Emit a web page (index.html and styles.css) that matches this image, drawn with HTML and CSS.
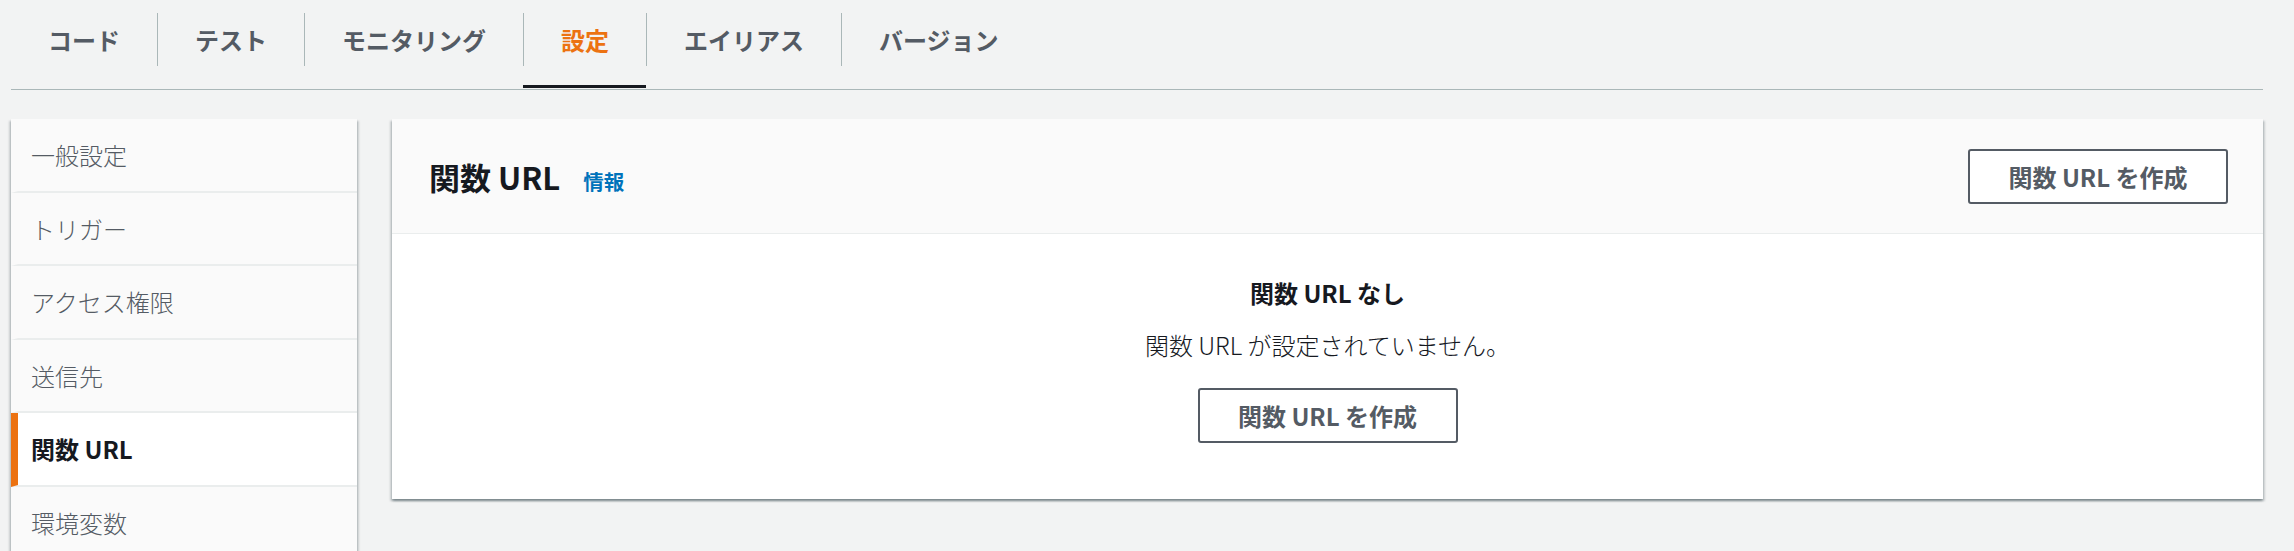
FILE: index.html
```html
<!DOCTYPE html>
<html lang="ja">
<head>
<meta charset="utf-8">
<title>関数 URL</title>
<link rel="stylesheet" href="styles.css">
</head>
<body>
<div class="page">
  <nav class="tabs">
    <div class="tab"><span class="tab-label first">コード</span></div>
    <div class="tab"><span class="tab-label">テスト</span></div>
    <div class="tab"><span class="tab-label">モニタリング</span></div>
    <div class="tab active"><span class="tab-label">設定</span></div>
    <div class="tab"><span class="tab-label">エイリアス</span></div>
    <div class="tab"><span class="tab-label">バージョン</span></div>
  </nav>
  <div class="layout">
    <aside class="sidenav">
      <div class="nav-item">一般設定</div>
      <div class="nav-item">トリガー</div>
      <div class="nav-item">アクセス権限</div>
      <div class="nav-item">送信先</div>
      <div class="nav-item active">関数 URL</div>
      <div class="nav-item">環境変数</div>
    </aside>
    <section class="panel">
      <header class="panel-header">
        <div class="panel-title">
          <h2>関数 URL</h2>
          <a class="info">情報</a>
        </div>
        <button class="btn">関数 URL を作成</button>
      </header>
      <div class="panel-body">
        <div class="empty-title">関数 URL なし</div>
        <div class="empty-text">関数 URL が設定されていません。</div>
        <button class="btn">関数 URL を作成</button>
      </div>
    </section>
  </div>
</div>
</body>
</html>
```
FILE: styles.css
```css
html, body {
  margin: 0;
  height: 100%;
  background: #f2f3f3;
  overflow: hidden;
}
body {
  font-family: "Noto Sans CJK JP", "Noto Sans", sans-serif;
  color: #16191f;
}
.page {
  padding: 0 31px 0 11px;
}
.tabs {
  display: flex;
  align-items: flex-start;
  height: 89px;
  border-bottom: 1px solid #aab7b8;
}
.tab {
  height: 88px;
  box-sizing: border-box;
  padding-top: 13px;
  border-bottom: 3px solid transparent;
}
.tab.active {
  border-bottom-color: #16191f;
}
.tab-label {
  display: block;
  height: 53px;
  line-height: 53px;
  padding: 0 37px;
  border-left: 1px solid #aab7b8;
  font-size: 24px;
  font-weight: 700;
  color: #545b64;
}
.tab-label.first {
  border-left: none;
}
.tab.active .tab-label {
  color: #ec7211;
}
.layout {
  display: flex;
  align-items: flex-start;
  gap: 35px;
  margin-top: 29px;
}
.sidenav {
  width: 346px;
  flex: none;
  background: #fafafa;
  box-shadow: 0 2px 2px 0 rgba(0, 28, 36, 0.3), 2px 2px 2px 0 rgba(0, 28, 36, 0.15), -2px 2px 2px 0 rgba(0, 28, 36, 0.15);
}
.nav-item {
  height: 73.5px;
  box-sizing: border-box;
  display: flex;
  align-items: center;
  padding-left: 13px;
  border-left: 7px solid transparent;
  border-bottom: 2px solid #eaeded;
  font-size: 24px;
  font-weight: 300;
  color: #545b64;
}
.nav-item.active {
  background: #fff;
  border-left-color: #ec7211;
  color: #16191f;
  font-weight: 700;
}
.panel {
  flex: 1;
  background: #fff;
  box-shadow: 0 2px 2px 0 rgba(0, 28, 36, 0.3), 2px 2px 2px 0 rgba(0, 28, 36, 0.15), -2px 2px 2px 0 rgba(0, 28, 36, 0.15);
}
.panel-header {
  height: 114px;
  box-sizing: content-box;
  display: flex;
  align-items: center;
  justify-content: space-between;
  padding: 0 35px 0 37px;
  background: #fafafa;
  border-bottom: 1px solid #eaeded;
}
.panel-title {
  display: flex;
  align-items: baseline;
}
.panel-title h2 {
  margin: 0;
  font-size: 31px;
  font-weight: 700;
  color: #16191f;
}
.info {
  margin-left: 23px;
  font-size: 20.5px;
  font-weight: 700;
  color: #0073bb;
}
.btn {
  width: 260px;
  height: 55px;
  box-sizing: border-box;
  padding: 0;
  background: #fff;
  border: 2px solid #545b64;
  border-radius: 3px;
  font-family: "Noto Sans CJK JP", "Noto Sans", sans-serif;
  font-size: 24px;
  font-weight: 700;
  color: #545b64;
}
.panel-body {
  padding: 42px 0 56px;
  text-align: center;
}
.empty-title {
  font-size: 24px;
  line-height: 34px;
  font-weight: 700;
  color: #16191f;
}
.empty-text {
  margin-top: 18px;
  font-size: 24px;
  line-height: 34px;
  font-weight: 300;
  color: #16191f;
}
.panel-body .btn {
  margin-top: 26px;
}
```
